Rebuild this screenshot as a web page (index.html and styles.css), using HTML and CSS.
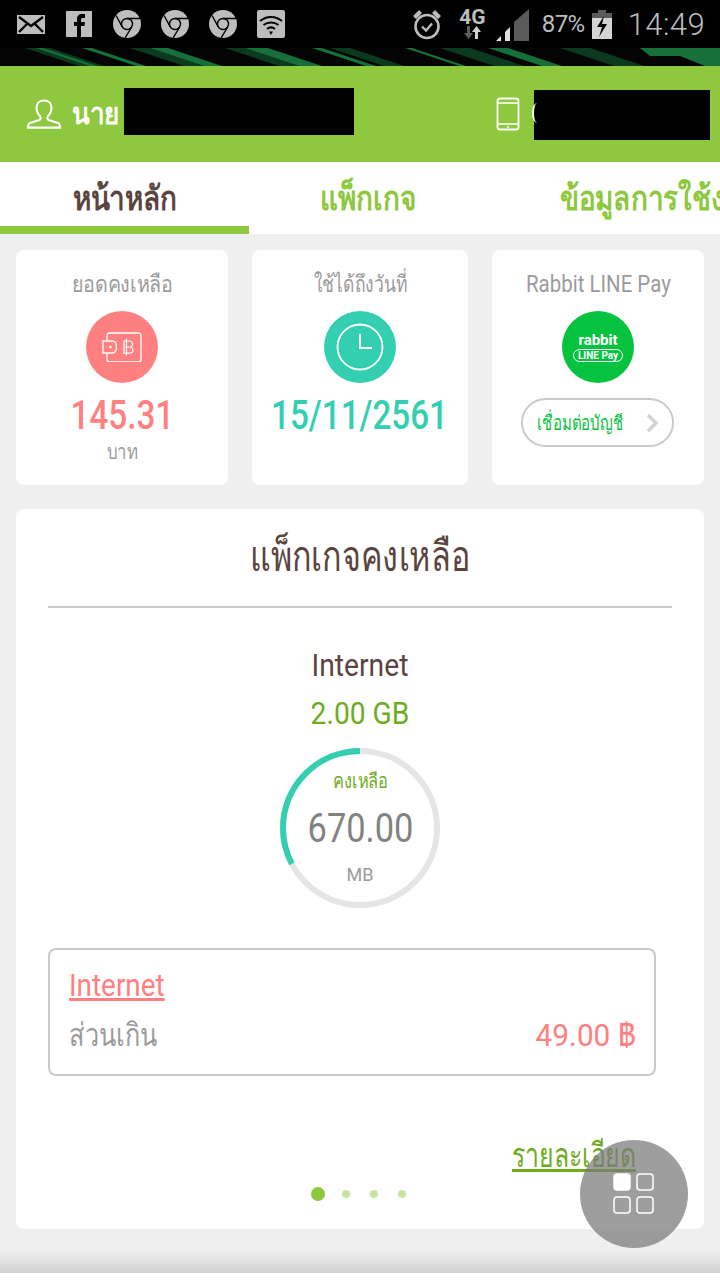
FILE: index.html
```html
<!DOCTYPE html>
<html lang="th">
<head>
    <meta charset="UTF-8">
    <meta name="viewport" content="width=device-width, initial-scale=1.0">
    <title>Mobile Account</title>
    <link rel="stylesheet" href="styles.css">
</head>
<body>
    <!-- Status bar -->
    <div class="status-bar">
        <div class="status-left">
            <svg width="28" height="19" viewBox="0 0 28 19"><rect width="28" height="19" fill="#bdbdbd"/><path d="M2 2l12 9 12-9M2 17l8.500-8.500M26 17l-8.500-8.500" fill="none" stroke="#000" stroke-width="2.400"/></svg>
            <svg class="ic-fb" width="26" height="26" viewBox="0 0 26 26"><rect width="26" height="26" fill="#bdbdbd"/><path d="M11 26V15H8v-4h3V8c0-3 2-5 5-5h3v4h-2c-1.300 0-2 .6-2 2v2h4l-.6 4H15v11z" fill="#000"/></svg>
            <svg class="ic-chrome" width="28" height="28" viewBox="0 0 28 28"><use href="#chrome"/></svg>
            <svg width="28" height="28" viewBox="0 0 28 28"><use href="#chrome"/></svg>
            <svg width="28" height="28" viewBox="0 0 28 28"><use href="#chrome"/></svg>
            <svg width="28" height="28" viewBox="0 0 28 28"><rect width="28" height="28" rx="2" fill="#bdbdbd"/><path d="M3 11c6.500-5.500 15.500-5.500 22 0M6.500 15c4.500-3.500 10.500-3.500 15 0M10 19c2.500-2 5.500-2 8 0" fill="none" stroke="#000" stroke-width="2"/><path d="M12 21.500h4L14 25z" fill="#000"/></svg>
        </div>
        <div class="status-right">
            <svg width="30" height="31" viewBox="0 0 30 31"><circle cx="15" cy="17.500" r="11.500" fill="none" stroke="#bdbdbd" stroke-width="2.600"/><path d="M10 17.500l4 4 6-7" fill="none" stroke="#bdbdbd" stroke-width="2.400"/><path d="M1 7l6-6 3 3-6 6zM29 7l-6-6-3 3 6 6z" fill="#bdbdbd"/></svg>
            <div class="net">
                <span class="net-label">4G</span>
                <svg width="18" height="13" viewBox="0 0 18 13"><path d="M4 0h3v7h3l-4.500 6L1 7h3z" fill="#5c5c5c"/><path d="M12 13h3V6h3L13.500 0 9 6h3z" fill="#d0d0d0"/></svg>
            </div>
            <svg class="ic-signal" width="33" height="32" viewBox="0 0 33 32"><path d="M0 32l5-5v5z" fill="#e0e0e0"/><path d="M9 23l5-5v14H9z" fill="#e0e0e0"/><path d="M18 13L33 0v32H18z" fill="#5a5a5a"/></svg>
            <span class="battery-text">87%</span>
            <svg class="ic-battery" width="20" height="29" viewBox="0 0 20 29"><path d="M6 0h8v3h6v26H0V3h6z" fill="#5a5a5a"/><path d="M0 8h20v21H0z" fill="#d4d4d4"/><path d="M12 6L5 17h5l-3 10 8-13h-5z" fill="#000"/></svg>
            <span class="clock">14:49</span>
        </div>
    </div>

    <svg class="wallpaper" width="720" height="18" viewBox="0 0 720 18">
        <rect width="720" height="18" fill="#050505"/>
        <g fill="#0c3a1e">
            <polygon points="25,0 50,0 104,18 79,18"/>
            <polygon points="130,0 150,0 204,18 184,18"/>
            <polygon points="225,0 245,0 299,18 279,18"/>
            <polygon points="330,0 350,0 404,18 384,18"/>
            <polygon points="440,0 470,0 524,18 494,18"/>
            <polygon points="560,0 590,0 644,18 614,18"/>
        </g>
        <g fill="#17703a">
            <polygon points="36,0 43,0 97,18 90,18"/>
            <polygon points="82,0 92,0 146,18 136,18"/>
            <polygon points="150,0 168,0 222,18 204,18"/>
            <polygon points="245,0 268,0 322,18 299,18"/>
            <polygon points="312,0 322,0 376,18 366,18"/>
            <polygon points="405,0 412,0 466,18 459,18"/>
            <polygon points="488,0 508,0 562,18 542,18"/>
            <polygon points="640,0 720,0 720,18 705,18 680,8 650,8"/>
        </g>
    </svg>

    <!-- User info -->
    <header class="user-bar">
        <div class="user-name">
            <svg class="ic-user" width="34" height="30" viewBox="0 0 36 32"><path d="M18 1.500c-5 0-8 3.500-8 8 0 4 2 7 4 9 .8 1 .5 3-1 4L3 25.500c-1.500.8-2 1.500-2 5h34c0-3.500-.5-4.200-2-5L23 22.500c-1.500-1-1.800-3-1-4 2-2 4-5 4-9 0-4.500-3-8-8-8z" fill="none" stroke="#fff" stroke-width="2.200"/></svg>
            <span class="user-title">นาย</span>
            <span class="redact redact-name"></span>
        </div>
        <div class="user-phone">
            <svg width="24" height="34" viewBox="0 0 24 34"><rect x="1.500" y="1.500" width="21" height="31" rx="2.500" fill="none" stroke="#fff" stroke-width="1.800"/><path d="M1.500 6h21M1.500 27h21" stroke="#fff" stroke-width="1.500"/><circle cx="12" cy="30" r="1" fill="#fff"/></svg>
            <span class="redact redact-phone"></span>
        </div>
    </header>

    <!-- Tabs -->
    <nav class="tabs">
        <a class="tab tab-active"><span class="tab-text">หน้าหลัก</span></a>
        <a class="tab tab-package"><span class="tab-text">แพ็กเกจ</span></a>
        <a class="tab tab-usage"><span class="tab-text tab-text-left">ข้อมูลการใช้งาน</span></a>
    </nav>

    <main class="content">
        <section class="summary">
            <div class="mini-card">
                <h3 class="title-balance">ยอดคงเหลือ</h3>
                <div class="badge badge-red">
                    <svg width="40" height="30" viewBox="0 0 40 30"><path d="M5 8V4c0-1.700 1-3 3-3h28c1.700 0 3 1.300 3 3v24c0 1.200-1 2-3 2H8c-2 0-3-1-3-3v-5" fill="none" stroke="#fff" stroke-width="1.300"/><path d="M1 9h9c3.500 0 4.500 2.500 4.500 6s-1 6-4.500 6H1z" fill="none" stroke="#fff" stroke-width="1.300"/><circle cx="8.500" cy="15" r="1.300" fill="#fff"/><path d="M22 9h5c2.500 0 3.500 1.200 3.500 3s-1.200 3-3.500 3c2.500 0 4 1.200 4 3.200s-1.500 3-4 3h-5zM24.500 6.500v17M23 15h4" fill="none" stroke="#fff" stroke-width="1.200"/></svg>
                </div>
                <div class="mini-value value-red">145.31</div>
                <div class="mini-unit">บาท</div>
            </div>
            <div class="mini-card mini-date">
                <h3 class="title-date">ใช้ได้ถึงวันที่</h3>
                <div class="badge badge-teal">
                    <svg width="48" height="48" viewBox="0 0 48 48"><circle cx="24" cy="24" r="22.500" fill="none" stroke="#fff" stroke-width="1.800"/><path d="M24 11v14h12" fill="none" stroke="#fff" stroke-width="2"/></svg>
                </div>
                <div class="mini-value value-teal">15/11/2561</div>
            </div>
            <div class="mini-card">
                <h3 class="title-rabbit">Rabbit LINE Pay</h3>
                <div class="badge badge-line">
                    <span class="rabbit-word">rabbit</span>
                    <span class="rabbit-pill">LINE Pay</span>
                </div>
                <a class="connect-btn">
                    <span class="connect-text">เชื่อมต่อบัญชี</span>
                    <svg width="12" height="20" viewBox="0 0 12 20"><path d="M2 2l8 8-8 8" fill="none" stroke="#d2d2d2" stroke-width="3.500"/></svg>
                </a>
            </div>
        </section>

        <section class="package-card">
            <h2><span class="package-title">แพ็กเกจคงเหลือ</span></h2>
            <div class="package-name">Internet</div>
            <div class="package-size">2.00 GB</div>
            <div class="gauge">
                <svg class="gauge-ring" width="160" height="160" viewBox="0 0 160 160">
                    <circle cx="80" cy="80" r="77" fill="none" stroke="#e5e5e5" stroke-width="6"/>
                    <circle class="gauge-value" cx="80" cy="80" r="77" fill="none" stroke="#33cfb0" stroke-width="6" stroke-dasharray="158 326"/>
                </svg>
                <div class="gauge-label">คงเหลือ</div>
                <div class="gauge-number">670.00</div>
                <div class="gauge-unit">MB</div>
            </div>
            <div class="extra-box">
                <a class="extra-link">Internet</a>
                <div class="extra-row">
                    <span class="extra-name">ส่วนเกิน</span>
                    <span class="extra-price">49.00 ฿</span>
                </div>
            </div>
            <div class="detail-row"><a class="detail-link">รายละเอียด</a></div>
            <div class="dots">
                <span class="dot dot-on"></span>
                <span class="dot"></span>
                <span class="dot"></span>
                <span class="dot"></span>
            </div>
        </section>
    </main>

    <div class="bottom-shade"></div>

    <button class="fab" type="button">
        <svg width="42" height="42" viewBox="0 0 42 42">
            <rect x="1" y="1" width="16" height="16" rx="3" fill="#fff" stroke="#fff" stroke-width="1.500"/>
            <rect x="24" y="1" width="16" height="16" rx="3" fill="none" stroke="#fff" stroke-width="1.500"/>
            <rect x="1" y="24" width="16" height="16" rx="3" fill="none" stroke="#fff" stroke-width="1.500"/>
            <rect x="24" y="24" width="16" height="16" rx="3" fill="none" stroke="#fff" stroke-width="1.500"/>
        </svg>
    </button>

    <svg class="defs" width="0" height="0">
        <symbol id="chrome" viewBox="0 0 28 28">
            <circle cx="14" cy="14" r="14" fill="#bdbdbd"/>
            <circle cx="14" cy="14" r="5.500" fill="none" stroke="#000" stroke-width="1.400"/>
            <path d="M14 8.500h13M9.300 17L3 5.500M18.700 17L12 28" fill="none" stroke="#000" stroke-width="1.400"/>
        </symbol>
    </svg>
</body>
</html>
```

FILE: styles.css
```css
/* General */
* {
    box-sizing: border-box;
}

body {
    position: relative;
    margin: 0;
    width: 720px;
    height: 1280px;
    overflow: hidden;
    background-color: #fff;
    font-family: Roboto, "Noto Sans", "Liberation Sans", sans-serif;
}

/* Status bar */
.status-bar {
    display: flex;
    justify-content: space-between;
    align-items: center;
    height: 48px;
    padding: 0 15px 0 17px;
    background-color: #000;
}

.status-left {
    display: flex;
    align-items: center;
    gap: 20px;
}

.status-left svg {
    display: block;
}

.ic-fb,
.ic-chrome {
    margin-left: 1px;
}

.status-right {
    display: flex;
    align-items: center;
    color: #bdbdbd;
}

.net {
    display: flex;
    flex-direction: column;
    align-items: center;
    margin: -1px 0 0 17px;
}

.net-label {
    font-size: 21px;
    font-weight: 700;
    line-height: 18px;
}

.ic-signal {
    margin: 2px 0 0 10px;
}

.battery-text {
    margin-left: 13px;
    font-size: 24px;
    letter-spacing: -0.5px;
}

.ic-battery {
    margin: 0 0 0 7px;
}

.clock {
    margin-left: 16px;
    font-size: 31px;
    font-weight: 300;
    letter-spacing: 0.4px;
}

.wallpaper {
    display: block;
}

/* Header */
.user-bar {
    display: flex;
    align-items: center;
    height: 96px;
    padding: 0 10px 0 27px;
    background-color: #8dc83e;
    color: #fff;
}

.user-name {
    display: flex;
    align-items: center;
    width: 469px;
}

.user-title {
    margin-left: 11px;
    font-size: 29px;
    font-weight: 700;
    transform: scaleX(0.9);
    transform-origin: left;
}

.redact {
    display: block;
    background-color: #000;
}

.redact-name {
    width: 230px;
    height: 47px;
    margin: -6px 0 0 -1px;
}

.user-phone {
    display: flex;
    align-items: center;
}

.redact-phone {
    position: relative;
    width: 176px;
    height: 50px;
    margin: 2px 0 0 14px;
}

/* bit of the number showing past the black box */
.redact-phone::before {
    content: "";
    position: absolute;
    left: -2px;
    top: 13px;
    width: 8px;
    height: 20px;
    border-left: 2px solid #fff;
    border-radius: 50%;
}

/* Tabs */
.tabs {
    display: flex;
    height: 72px;
    overflow: hidden;
    background-color: #fff;
}

.tab {
    flex: none;
    height: 72px;
    padding-top: 9px;
    font-size: 34px;
    font-weight: 700;
    text-align: center;
    white-space: nowrap;
    color: #8dc83e;
}

.tab-text {
    display: inline-block;
    transform: scaleX(0.82);
}

.tab-text-left {
    transform-origin: left;
}

.tab-active {
    width: 249px;
    border-bottom: 8px solid #8dc83e;
    color: #5b4440;
}

.tab-package {
    width: 238px;
}

.tab-usage {
    margin-left: 73px;
}

/* Content */
.content {
    height: 1016px;
    padding: 16px;
    background-color: #efefef;
}

.summary {
    display: flex;
    gap: 24px;
}

.mini-card {
    display: flex;
    flex-direction: column;
    align-items: center;
    width: 212px;
    height: 235px;
    padding-top: 18px;
    background-color: #fff;
    border-radius: 8px;
}

.mini-date {
    width: 216px;
}

.mini-card h3 {
    height: 34px;
    margin: 0;
    font-size: 23px;
    font-weight: 400;
    line-height: 34px;
    white-space: nowrap;
    color: #9b9b9b;
}

.mini-card .title-balance {
    transform: scaleX(0.855);
}

.mini-card .title-date {
    transform: scaleX(0.76);
}

.mini-card .title-rabbit {
    transform: scaleX(0.89);
}

.badge {
    display: flex;
    flex-direction: column;
    align-items: center;
    justify-content: center;
    flex: none;
    width: 72px;
    height: 72px;
    margin-top: 9px;
    border-radius: 50%;
}

.badge-red {
    background-color: #ff8080;
}

.badge-teal {
    background-color: #33cfb0;
}

.badge-line {
    background-color: #06c33f;
    color: #fff;
}

.rabbit-word {
    font-size: 15px;
    font-weight: 700;
    line-height: 14px;
}

.rabbit-pill {
    margin-top: 2px;
    padding: 0 4px;
    border: 1.500px solid #fff;
    border-radius: 8px;
    font-size: 10px;
    font-weight: 700;
    line-height: 11px;
}

.mini-value {
    margin-top: 11px;
    font-size: 40px;
    font-weight: 500;
    line-height: 44px;
    white-space: nowrap;
    transform: scaleX(0.83);
}

.value-red {
    color: #ff8080;
}

.value-teal {
    color: #33cfb0;
}

.mini-unit {
    font-size: 21px;
    line-height: 28px;
    color: #9b9b9b;
    transform: scaleX(0.8);
}

.connect-btn {
    display: flex;
    align-items: center;
    justify-content: space-between;
    width: 153px;
    height: 49px;
    margin: 15px 1px 0 0;
    padding: 0 14px 0 14px;
    border: 2px solid #cacaca;
    border-radius: 25px;
    font-size: 20px;
    color: #06c33f;
}

.connect-text {
    width: 96px;
    white-space: nowrap;
    transform: scaleX(0.75);
    transform-origin: left;
}

/* Package card */
.package-card {
    height: 720px;
    margin-top: 24px;
    padding: 0 32px;
    background-color: #fff;
    border-radius: 8px;
}

.package-card h2 {
    height: 99px;
    margin: 0;
    border-bottom: 2px solid #c9c9c9;
    font-size: 42px;
    font-weight: 400;
    line-height: 96px;
    text-align: center;
    color: #5b4440;
}

.package-title {
    display: inline-block;
    transform: scaleX(0.77);
}

.package-name {
    margin-top: 39px;
    font-size: 31px;
    line-height: 38px;
    text-align: center;
    color: #5b4440;
    transform: scaleX(0.91);
}

.package-size {
    margin-top: 10px;
    font-size: 31px;
    line-height: 38px;
    text-align: center;
    color: #6fab1f;
    transform: scaleX(0.91);
}

.gauge {
    position: relative;
    display: flex;
    flex-direction: column;
    align-items: center;
    width: 160px;
    height: 160px;
    margin: 15px auto 0;
}

.gauge-ring {
    position: absolute;
    top: 0;
    left: 0;
}

.gauge-value {
    transform: scaleX(-1) rotate(-90deg);
    transform-origin: center;
}

.gauge-label {
    margin-top: 19px;
    font-size: 20px;
    line-height: 28px;
    color: #6fab1f;
    transform: scaleX(0.82);
}

.gauge-number {
    margin-top: 11px;
    font-size: 40px;
    line-height: 46px;
    color: #828282;
    transform: scaleX(0.86);
}

.gauge-unit {
    margin-top: 11px;
    font-size: 18px;
    line-height: 24px;
    color: #9b9b9b;
}

.extra-box {
    width: 608px;
    height: 128px;
    margin-top: 40px;
    padding: 17px 18px 0 19px;
    border: 2px solid #c9c9c9;
    border-radius: 8px;
}

.extra-link {
    display: block;
    width: 110px;
    font-size: 31px;
    line-height: 38px;
    color: #ff8080;
    text-decoration: underline;
    transform: scaleX(0.9);
    transform-origin: left;
}

.extra-row {
    display: flex;
    justify-content: space-between;
    align-items: center;
    margin-top: 9px;
    font-size: 32px;
    line-height: 42px;
}

.extra-name {
    color: #9b9b9b;
    transform: scaleX(0.79);
    transform-origin: left;
}

.extra-price {
    color: #ff8080;
    transform: scaleX(0.93);
    transform-origin: right;
}

.detail-row {
    display: flex;
    justify-content: flex-end;
    width: 588px;
    margin-top: 59px;
}

.detail-link {
    font-size: 34px;
    line-height: 40px;
    color: #6fab1f;
    text-decoration: underline;
    transform: scaleX(0.73);
    transform-origin: right;
}

.dots {
    display: flex;
    align-items: center;
    gap: 20px;
    margin: 12px 0 0 263px;
}

.dot {
    width: 8px;
    height: 8px;
    border-radius: 50%;
    background-color: #c6e49e;
}

.dot-on {
    width: 14px;
    height: 14px;
    margin-right: -3px;
    background-color: #8dc83e;
}

/* Bottom shade and floating button */
.bottom-shade {
    height: 23px;
    background: linear-gradient(#efefef, #d2d2d2);
}

.fab {
    position: absolute;
    left: 580px;
    top: 1140px;
    display: flex;
    align-items: center;
    justify-content: center;
    width: 108px;
    height: 108px;
    padding: 0;
    border: none;
    border-radius: 50%;
    background-color: rgba(120, 120, 120, 0.72);
}

.defs {
    position: absolute;
}
```
